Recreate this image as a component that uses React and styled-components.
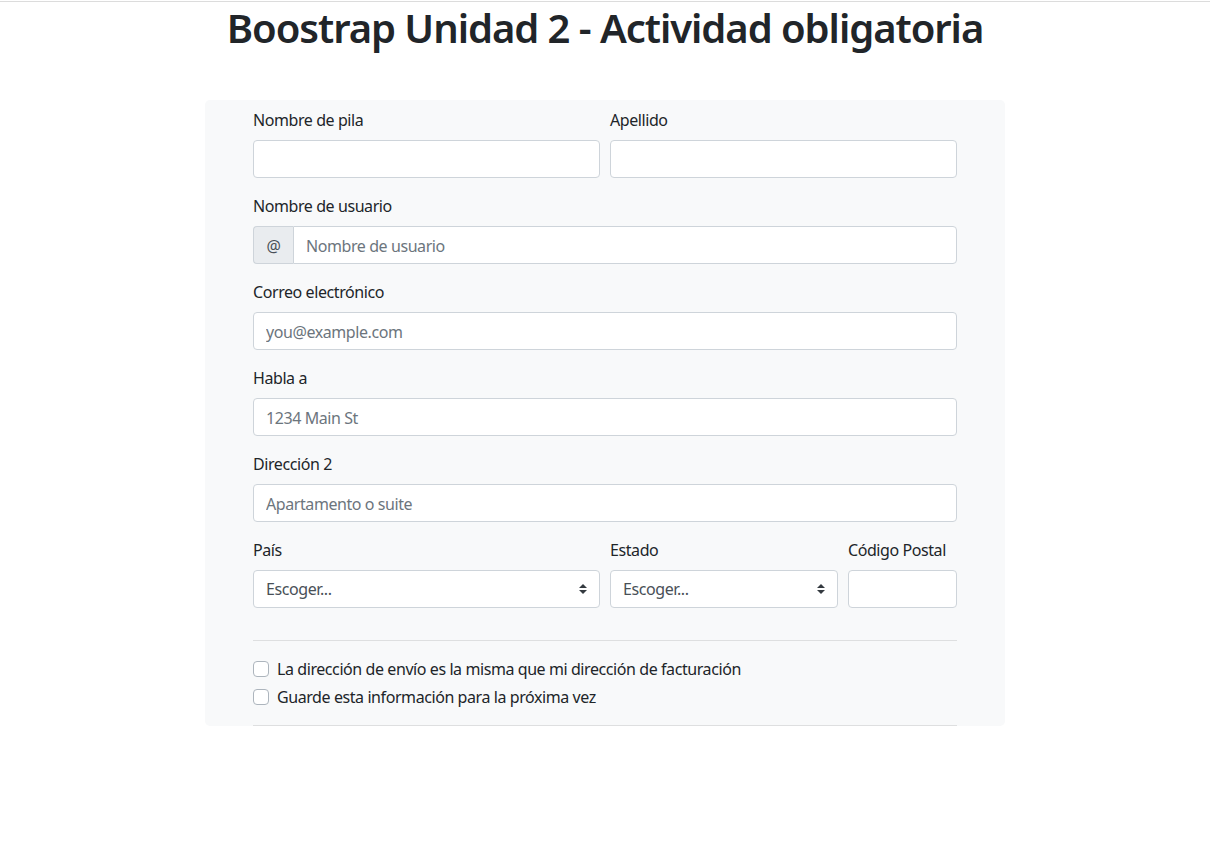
import React from "react";
import styled, { createGlobalStyle } from "styled-components";

const GlobalStyle = createGlobalStyle`
  * { box-sizing: border-box; }
  body {
    margin: 0;
    background: #fff;
    color: #212529;
    font-family: "Noto Sans", "Open Sans", sans-serif;
    font-size: 16px;
    line-height: 1.5;
    letter-spacing: -0.42px;
  }
`;

const Page = styled.div`
  padding-right: 3px;
`;

const TopLine = styled.div`
  margin-top: 1px;
  height: 1px;
  background: #dcdcdc;
`;

const Title = styled.h1`
  margin: 2px 0 48px;
  text-align: center;
  font-size: 40px;
  font-weight: 600;
  letter-spacing: -1.05px;
  line-height: 1.2;
  color: #212529;
`;

const Panel = styled.form`
  width: 800px;
  margin: 0 auto;
  background: #f8f9fa;
  border-radius: 5px;
  padding: 8px 48px 0;
`;

const Row = styled.div`
  display: grid;
  grid-template-columns: ${(p) => p.$cols || "1fr"};
  column-gap: 10px;
`;

const Field = styled.div`
  margin-bottom: 16px;
  min-width: 0;
`;

const Label = styled.label`
  display: block;
  margin-bottom: 8px;
  line-height: 24px;
  font-size: 16px;
  color: #212529;
`;

const Input = styled.input`
  display: block;
  width: 100%;
  height: 38px;
  padding: 7px 12px 5px;
  font-family: inherit;
  font-size: 16px;
  letter-spacing: inherit;
  line-height: 24px;
  color: #495057;
  background: #fff;
  border: 1px solid #ced4da;
  border-radius: ${(p) => (p.$joined ? "0 4px 4px 0" : "4px")};
  outline: none;
  &::placeholder { color: #6c757d; opacity: 1; }
`;

const InputGroup = styled.div`
  display: flex;
  width: 100%;
`;

const Addon = styled.span`
  display: flex;
  align-items: center;
  justify-content: center;
  width: 40px;
  flex: none;
  height: 38px;
  padding-top: 1px;
  font-size: 16px;
  color: #495057;
  background: #e9ecef;
  border: 1px solid #ced4da;
  border-right: none;
  border-radius: 4px 0 0 4px;
`;

const Select = styled.select`
  display: block;
  width: 100%;
  height: 38px;
  padding: 6px 28px 6px 12px;
  font-family: inherit;
  font-size: 16px;
  letter-spacing: inherit;
  line-height: 24px;
  color: #495057;
  border: 1px solid #ced4da;
  border-radius: 4px;
  appearance: none;
  -webkit-appearance: none;
  outline: none;
  background: #fff url("data:image/svg+xml,%3csvg xmlns='http://www.w3.org/2000/svg' width='4' height='5' viewBox='0 0 4 5'%3e%3cpath fill='%23343a40' d='M2 0L0 2h4zm0 5L0 3h4z'/%3e%3c/svg%3e") no-repeat right 12px center / 8px 10px;
`;

const Rule = styled.hr`
  margin: ${(p) => (p.$last ? "16px 0 0" : "16px 0")};
  border: 0;
  border-top: 1px solid rgba(0, 0, 0, 0.1);
  height: 0;
`;

const Check = styled.label`
  display: flex;
  align-items: center;
  gap: 8px;
  height: 24px;
  font-size: 16px;
  line-height: 24px;
  color: #212529;
  & + & { margin-top: 4px; }
`;

const Box = styled.span`
  width: 16px;
  height: 16px;
  flex: none;
  background: #fff;
  border: 1px solid #adb5bd;
  border-radius: 4px;
`;

export default function App() {
  return (
    <Page>
      <GlobalStyle />
      <TopLine />
      <Title>Boostrap Unidad 2 - Actividad obligatoria</Title>
      <Panel onSubmit={(e) => e.preventDefault()}>
        <Row $cols="1fr 1fr">
          <Field>
            <Label>Nombre de pila</Label>
            <Input type="text" />
          </Field>
          <Field>
            <Label>Apellido</Label>
            <Input type="text" />
          </Field>
        </Row>
        <Field>
          <Label>Nombre de usuario</Label>
          <InputGroup>
            <Addon>@</Addon>
            <Input $joined type="text" placeholder="Nombre de usuario" />
          </InputGroup>
        </Field>
        <Field>
          <Label>Correo electrónico</Label>
          <Input type="email" placeholder="you@example.com" />
        </Field>
        <Field>
          <Label>Habla a</Label>
          <Input type="text" placeholder="1234 Main St" />
        </Field>
        <Field>
          <Label>Dirección 2</Label>
          <Input type="text" placeholder="Apartamento o suite" />
        </Field>
        <Row $cols="calc(50% - 5px) calc(33.3333% - 6.6667px) 1fr">
          <Field>
            <Label>País</Label>
            <Select defaultValue="">
              <option value="">Escoger...</option>
            </Select>
          </Field>
          <Field>
            <Label>Estado</Label>
            <Select defaultValue="">
              <option value="">Escoger...</option>
            </Select>
          </Field>
          <Field>
            <Label>Código Postal</Label>
            <Input type="text" />
          </Field>
        </Row>
        <Rule />
        <Check>
          <Box />
          La dirección de envío es la misma que mi dirección de facturación
        </Check>
        <Check>
          <Box />
          Guarde esta información para la próxima vez
        </Check>
        <Rule $last />
      </Panel>
    </Page>
  );
}
